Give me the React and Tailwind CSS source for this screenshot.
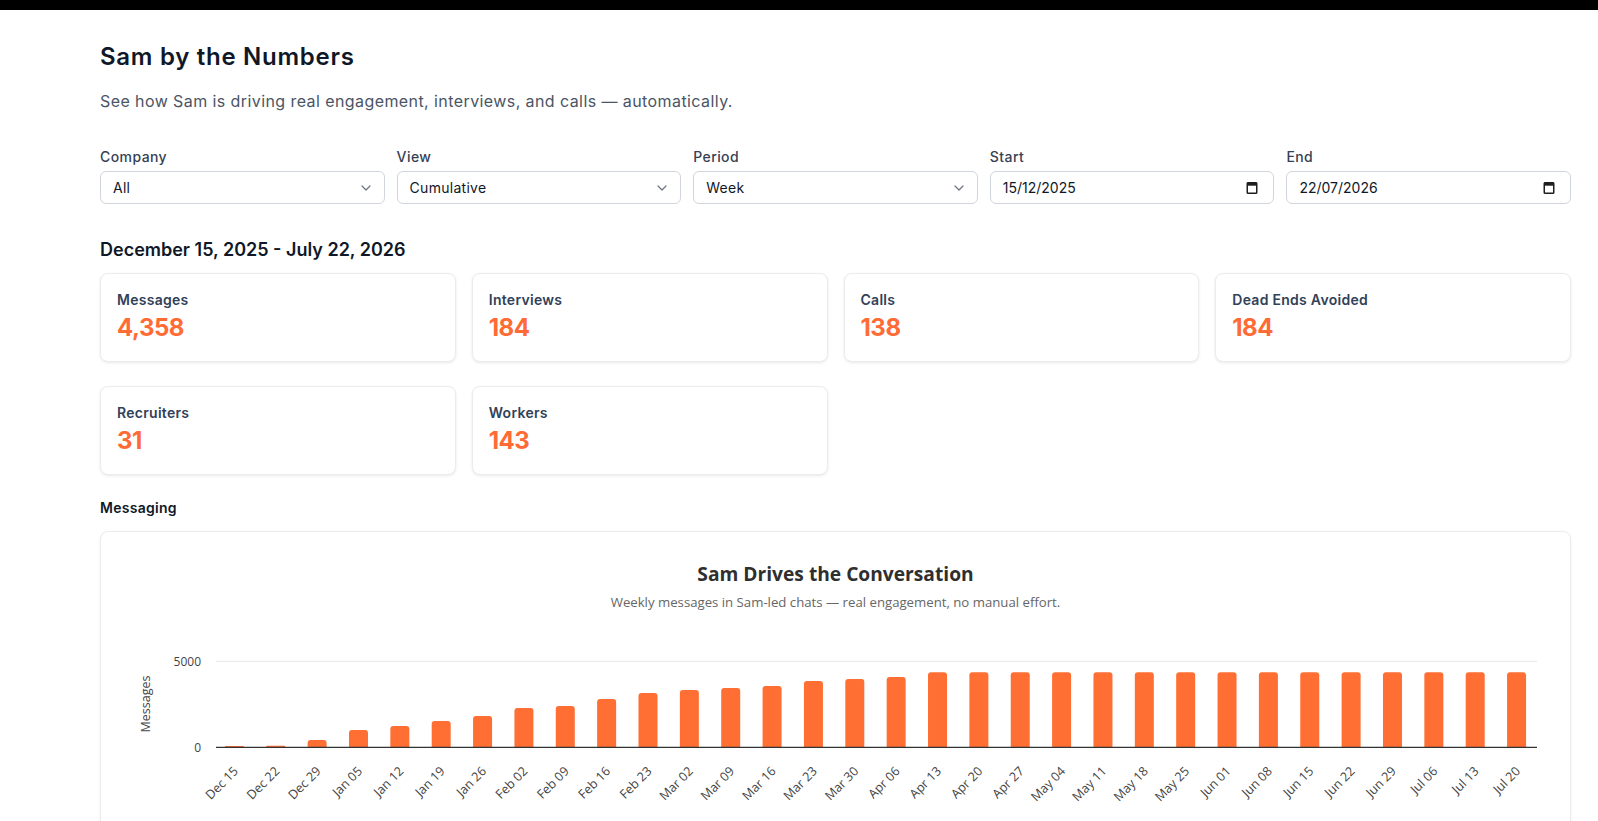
import React from "react";

const weeks = [
  "Dec 15", "Dec 22", "Dec 29", "Jan 05", "Jan 12", "Jan 19", "Jan 26", "Feb 02",
  "Feb 09", "Feb 16", "Feb 23", "Mar 02", "Mar 09", "Mar 16", "Mar 23", "Mar 30",
  "Apr 06", "Apr 13", "Apr 20", "Apr 27", "May 04", "May 11", "May 18", "May 25",
  "Jun 01", "Jun 08", "Jun 15", "Jun 22", "Jun 29", "Jul 06", "Jul 13", "Jul 20",
];

const cumulative = [
  80, 90, 426, 1008, 1240, 1531, 1822, 2287, 2403, 2810, 3159, 3333, 3450, 3566,
  3857, 3973, 4089, ...Array(15).fill(4358),
];

const stats = [
  { label: "Messages", value: "4,358" },
  { label: "Interviews", value: "184" },
  { label: "Calls", value: "138" },
  { label: "Dead Ends Avoided", value: "184" },
  { label: "Recruiters", value: "31" },
  { label: "Workers", value: "143" },
];

function Chevron() {
  return (
    <svg width="10" height="6" viewBox="0 0 10 6" fill="none">
      <path d="M1 1l4 4 4-4" stroke="#6b7280" strokeWidth="1.2" strokeLinecap="round" strokeLinejoin="round" />
    </svg>
  );
}

function CalendarGlyph() {
  return (
    <svg width="12" height="13" viewBox="0 0 12 13" fill="none">
      <rect x="1.25" y="1.75" width="9.5" height="10.5" rx="0.8" stroke="#1f1f1f" strokeWidth="1.5" />
      <rect x="1" y="1.5" width="10" height="3.2" fill="#1f1f1f" />
    </svg>
  );
}

function SelectField({ label, value }) {
  return (
    <div>
      <div className="mb-1 text-sm leading-5 font-medium tracking-[0.03em] text-gray-700">{label}</div>
      <div className="flex h-[33px] items-center justify-between rounded-md border border-gray-300 bg-white pl-3 pr-[13px] text-sm tracking-[0.02em] text-gray-900">
        <span>{value}</span>
        <Chevron />
      </div>
    </div>
  );
}

function DateField({ label, value }) {
  return (
    <div>
      <div className="mb-1 text-sm leading-5 font-medium tracking-[0.03em] text-gray-700">{label}</div>
      <div className="flex h-[33px] items-center justify-between rounded-md border border-gray-300 bg-white pl-3 pr-[15px] text-sm text-gray-900">
        <span>{value}</span>
        <CalendarGlyph />
      </div>
    </div>
  );
}

function StatCard({ label, value }) {
  return (
    <div className="rounded-lg border border-[#ececec] bg-white px-4 pt-4 pb-[17px] shadow-[0_1px_3px_rgba(0,0,0,0.09)]">
      <div className="text-sm leading-5 font-semibold tracking-[0.02em] text-slate-700">{label}</div>
      <div className="mt-0.5 text-2xl leading-8 font-bold tracking-[-0.02em] text-[#ff6b35]">{value}</div>
    </div>
  );
}

function MessagesChart() {
  const zero = 215.3;
  const top5000 = 129.3;
  const scale = (zero - top5000) / 5000;
  const x0 = 133.4;
  const step = 41.36;
  const bw = 19;
  const font = "'Open Sans', 'Liberation Sans', sans-serif";

  return (
    <svg className="block w-full" viewBox="0 0 1469 320" height="320">
      <text x="734.5" y="49.3" textAnchor="middle" fontFamily={font} fontSize="19.2" fontWeight="700" fill="#2f2f2f">
        Sam Drives the Conversation
      </text>
      <text x="734.5" y="75.3" textAnchor="middle" fontFamily={font} fontSize="13.2" fill="#666">
        Weekly messages in Sam-led chats — real engagement, no manual effort.
      </text>

      <line x1="115" x2="1436" y1={top5000} y2={top5000} stroke="#e6e6e6" strokeWidth="1" />
      <text x="100" y="133.6" textAnchor="end" fontFamily={font} fontSize="12" fill="#444">5000</text>
      <text x="100" y="219.6" textAnchor="end" fontFamily={font} fontSize="12" fill="#444">0</text>
      <text x="49" y="172" textAnchor="middle" transform="rotate(-90 49 172)" fontFamily={font} fontSize="12.5" fill="#444">
        Messages
      </text>

      {cumulative.map((v, i) => {
        const c = x0 + i * step;
        const h = v * scale;
        const left = c - bw / 2;
        const t = zero - h;
        const r = Math.min(3, h / 2);
        const d = `M${left} ${zero} V${t + r} Q${left} ${t} ${left + r} ${t} H${left + bw - r} Q${left + bw} ${t} ${left + bw} ${t + r} V${zero} Z`;
        return <path key={weeks[i]} d={d} fill="#ff6e33" />;
      })}

      <line x1="115" x2="1436" y1={zero} y2={zero} stroke="#333" strokeWidth="1.2" />

      {weeks.map((w, i) => {
        const bx = x0 + i * step + 4.5;
        const by = 240;
        return (
          <text
            key={w}
            x={bx}
            y={by}
            textAnchor="end"
            transform={`rotate(-45 ${bx} ${by})`}
            fontFamily={font}
            fontSize="12.6"
            fill="#444"
          >
            {w}
          </text>
        );
      })}
    </svg>
  );
}

export default function App() {
  return (
    <div className="min-h-screen bg-white font-['Inter','Liberation_Sans',sans-serif]">
      <div className="h-[10px] bg-black" />
      <main className="pl-[100px] pr-[27px] pt-[31px] pb-10">
        <h1 className="text-2xl leading-8 font-semibold tracking-[0.03em] text-gray-900">Sam by the Numbers</h1>
        <p className="mt-4 text-base leading-6 tracking-[0.026em] text-gray-600">
          See how Sam is driving real engagement, interviews, and calls — automatically.
        </p>

        <div className="mt-[34px] grid grid-cols-5 gap-3">
          <SelectField label="Company" value="All" />
          <SelectField label="View" value="Cumulative" />
          <SelectField label="Period" value="Week" />
          <DateField label="Start" value="15/12/2025" />
          <DateField label="End" value="22/07/2026" />
        </div>

        <h2 className="mt-8 text-lg leading-7 font-semibold text-gray-900">December 15, 2025 - July 22, 2026</h2>

        <div className="mt-[9px] grid grid-cols-4 gap-x-4 gap-y-6">
          {stats.map((s) => (
            <StatCard key={s.label} label={s.label} value={s.value} />
          ))}
        </div>

        <h3 className="mt-[23px] text-sm leading-5 font-semibold tracking-[0.02em] text-gray-900">Messaging</h3>

        <div className="mt-[13px] overflow-hidden rounded-lg border border-[#ececec] bg-white shadow-[0_1px_3px_rgba(0,0,0,0.06)]">
          <MessagesChart />
        </div>
      </main>
    </div>
  );
}
